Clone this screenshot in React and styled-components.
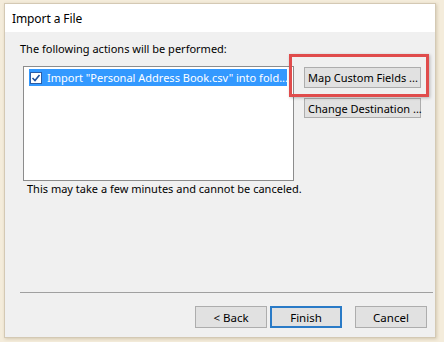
import React from 'react';
import styled, { createGlobalStyle } from 'styled-components';

const GlobalStyle = createGlobalStyle`
  html, body {
    margin: 0;
    padding: 0;
    background: #f4ecdb;
  }
  body {
    font-family: "Noto Sans", "Open Sans", sans-serif;
    font-size: 11px;
    color: #000;
  }
`;

const Screen = styled.div`
  width: 444px;
  height: 342px;
  overflow: hidden;
  padding: 3px 8px 0 4px;
  box-sizing: border-box;
`;

const Dialog = styled.div`
  width: 432px;
  height: 335px;
  box-sizing: border-box;
  border: 1px solid #d4c9b4;
  background: #f0f0f0;
  display: flex;
  flex-direction: column;
  box-shadow: 1px 1px 3px rgba(120, 100, 60, 0.25);
`;

const TitleBar = styled.div`
  height: 28px;
  background: #fff;
  display: flex;
  align-items: center;
  padding-left: 7px;
  font-size: 12px;
  letter-spacing: -0.1px;
`;

const Body = styled.div`
  flex: 1;
  display: flex;
  flex-direction: column;
  padding: 8px 8px 0 15px;
`;

const Content = styled.div`
  display: flex;
  flex: 1;
`;

const LeftColumn = styled.div`
  display: flex;
  flex-direction: column;
  width: 274px;
  flex: none;
`;

const Label = styled.div`
  height: 18px;
  line-height: 18px;
  white-space: nowrap;
  padding-left: ${p => p.$indent || 0}px;
`;

const ListBox = styled.div`
  margin: 8px 0 0 3px;
  width: 271px;
  height: 115px;
  box-sizing: border-box;
  border: 1px solid #8c8c8c;
  background: #fff;
  padding: 2px 6px 0 5px;
`;

const Row = styled.div`
  display: flex;
  align-items: center;
  height: 17px;
  background: #3399ff;
  color: #fff;
  white-space: nowrap;
  overflow: hidden;
  padding-left: 1px;
`;

const Check = styled.span`
  width: 12px;
  height: 12px;
  box-sizing: border-box;
  margin-right: 5px;
  border: 1px solid #2b5da6;
  background: #fff;
  display: inline-flex;
  align-items: center;
  justify-content: center;
  flex: none;
`;

const Note = styled(Label)`
  line-height: 16px;
`;

const SideButtons = styled.div`
  display: flex;
  flex-direction: column;
  gap: 10px;
  margin: 27px 0 0 10px;
`;

const Highlight = styled.div`
  position: relative;
`;

const RedFrame = styled.span`
  position: absolute;
  left: -15px;
  top: -13px;
  width: 140px;
  height: 43px;
  box-sizing: border-box;
  border: 3px solid #e04c4c;
  box-shadow: 1px 1px 3px rgba(0, 0, 0, 0.25);
  pointer-events: none;
`;

const SideButton = styled.button`
  width: 117px;
  height: ${p => p.$tall ? 21 : 20}px;
  box-sizing: border-box;
  border: 1px solid #adadad;
  background: #e1e1e1;
  font-family: inherit;
  font-size: 11px;
  padding: 0 0 0 3px;
  text-align: left;
  white-space: nowrap;
  color: #000;
`;

const Divider = styled.hr`
  margin: 0 0 13px 0;
  width: 413px;
  border: 0;
  border-top: 1px solid #a0a0a0;
`;

const Footer = styled.div`
  display: flex;
  justify-content: flex-end;
  gap: 3px;
  height: 31px;
`;

const FooterButton = styled.button`
  width: 72px;
  height: 22px;
  box-sizing: border-box;
  border: ${p => (p.$default ? '2px solid #2a7bc7' : '1px solid #adadad')};
  background: #e1e1e1;
  font-family: inherit;
  font-size: 11.5px;
  color: #000;
  padding: 0;
  margin-left: ${p => p.$gapBefore || 0}px;
`;

function CheckMark() {
  return (
    <Check>
      <svg width="10" height="10" viewBox="0 0 10 10">
        <path d="M1.5 5 L4 7.5 L8.5 2" fill="none" stroke="#1f4f9a" strokeWidth="1.6" />
      </svg>
    </Check>
  );
}

export default function App() {
  return (
    <Screen>
      <GlobalStyle />
      <Dialog>
        <TitleBar>Import a File</TitleBar>
        <Body>
          <Content>
            <LeftColumn>
              <Label>The following actions will be performed:</Label>
              <ListBox>
                <Row>
                  <CheckMark />
                  Import "Personal Address Book.csv" into fold...
                </Row>
              </ListBox>
              <Note $indent={7}>This may take a few minutes and cannot be canceled.</Note>
            </LeftColumn>
            <SideButtons>
              <Highlight>
                <SideButton $tall>Map Custom Fields ...</SideButton>
                <RedFrame />
              </Highlight>
              <SideButton>Change Destination ...</SideButton>
            </SideButtons>
          </Content>
          <Divider />
          <Footer>
            <FooterButton>&lt; Back</FooterButton>
            <FooterButton $default>Finish</FooterButton>
            <FooterButton $gapBefore={10}>Cancel</FooterButton>
          </Footer>
        </Body>
      </Dialog>
    </Screen>
  );
}
